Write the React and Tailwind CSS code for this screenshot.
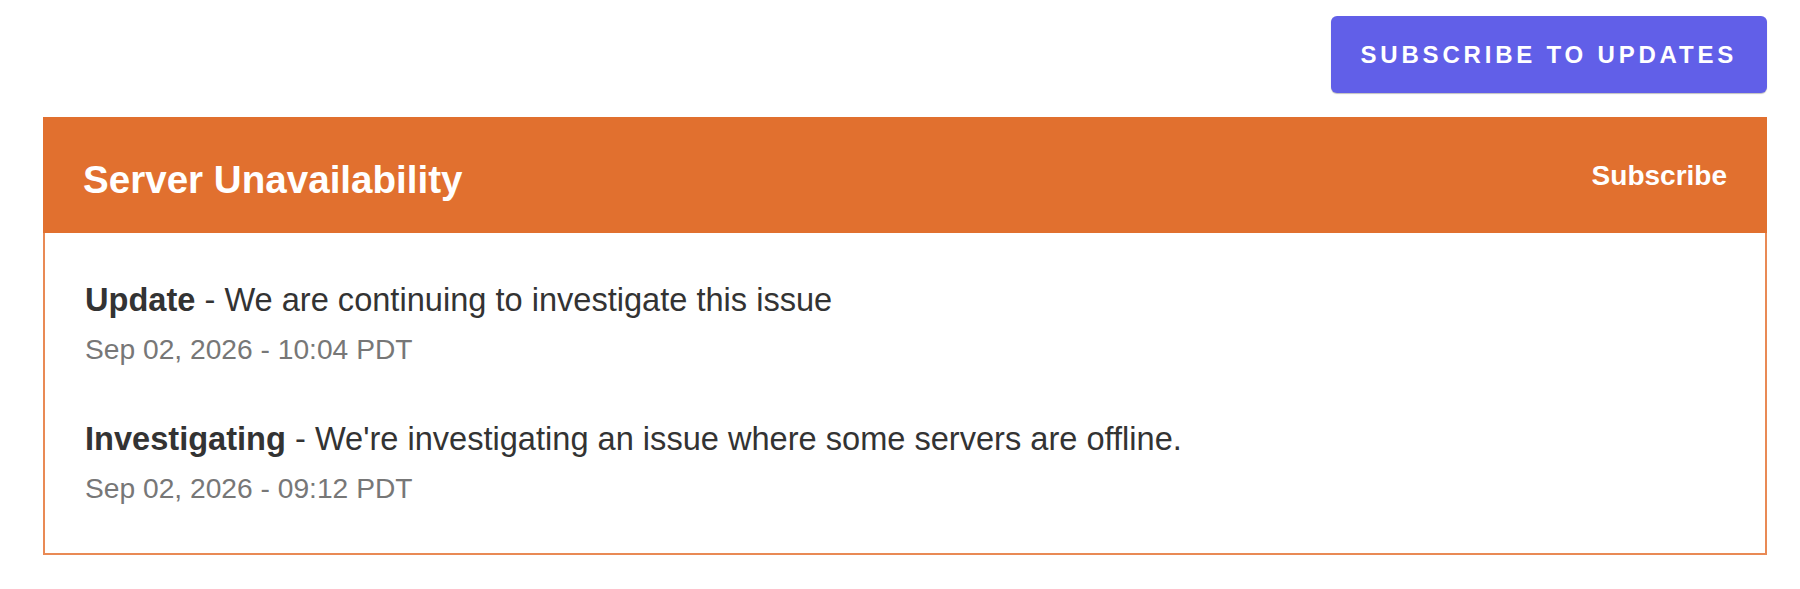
export default function App() {
  const entries = [
    {
      status: "Update",
      text: "We are continuing to investigate this issue",
      date: "Sep 02, 2026 - 10:04 PDT",
    },
    {
      status: "Investigating",
      text: "We're investigating an issue where some servers are offline.",
      date: "Sep 02, 2026 - 09:12 PDT",
    },
  ];
  return (
    <div
      className="w-[1800px] h-[589px] bg-white pl-[43px] pr-[33px] pt-[16px]"
      style={{ fontFamily: '"Liberation Sans", Arial, Helvetica, sans-serif' }}
    >
      <div className="flex justify-end">
        <button className="h-[77px] px-[30px] flex items-center rounded-[6px] bg-[#615fe8] text-white text-[24px] font-bold tracking-[3.8px] shadow-[0_1px_1px_rgba(0,0,0,0.25)]">
          SUBSCRIBE TO UPDATES
        </button>
      </div>
      <div className="mt-[24px] border-2 border-[#e98a55]">
        <div className="-m-[2px] h-[116px] bg-[#e1702f] px-10 flex items-center justify-between">
          <h2 className="text-[38.6px] leading-[46px] font-bold text-white mt-[10px]">
            Server Unavailability
          </h2>
          <span className="text-[28px] leading-[34px] font-bold text-white mt-[2px]">
            Subscribe
          </span>
        </div>
        <div className="px-10 pt-[49px] pb-[47px] flex flex-col gap-[52px]">
          {entries.map((e) => (
            <div key={e.status} className="flex flex-col gap-[11px]">
              <div className="text-[32.6px] leading-[40px] text-[#333333]">
                <span className="font-bold">{e.status}</span> - {e.text}
              </div>
              <div className="text-[28.2px] leading-[36px] text-[#777777]">
                {e.date}
              </div>
            </div>
          ))}
        </div>
      </div>
    </div>
  );
}
